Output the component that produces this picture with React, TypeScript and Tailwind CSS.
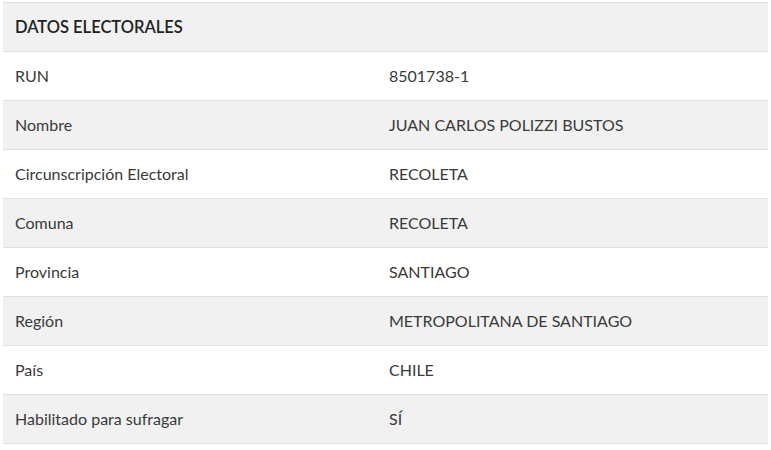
const rows: [string, string][] = [
  ["RUN", "8501738-1"],
  ["Nombre", "JUAN CARLOS POLIZZI BUSTOS"],
  ["Circunscripción Electoral", "RECOLETA"],
  ["Comuna", "RECOLETA"],
  ["Provincia", "SANTIAGO"],
  ["Región", "METROPOLITANA DE SANTIAGO"],
  ["País", "CHILE"],
  ["Habilitado para sufragar", "SÍ"],
];

export default function App() {
  return (
    <div className="bg-white px-[3px] pt-[2px] font-['Lato',sans-serif] text-[16px] text-[#3a3a3a]">
      <div className="border-t border-[#e2e2e2]">
        <div className="flex h-[49px] items-center border-b border-[#e2e2e2] bg-[#f1f1f1] px-3 text-[16.5px] font-semibold text-[#222]">
          DATOS ELECTORALES
        </div>
        {rows.map(([label, value], i) => (
          <div
            key={label}
            className={
              i % 2 === 0
                ? "flex h-[49px] items-center border-b border-[#e2e2e2] bg-white"
                : "flex h-[49px] items-center border-b border-[#e2e2e2] bg-[#f1f1f1]"
            }
          >
            <div className="w-[374px] px-3">{label}</div>
            <div className="px-3">{value}</div>
          </div>
        ))}
      </div>
    </div>
  );
}
